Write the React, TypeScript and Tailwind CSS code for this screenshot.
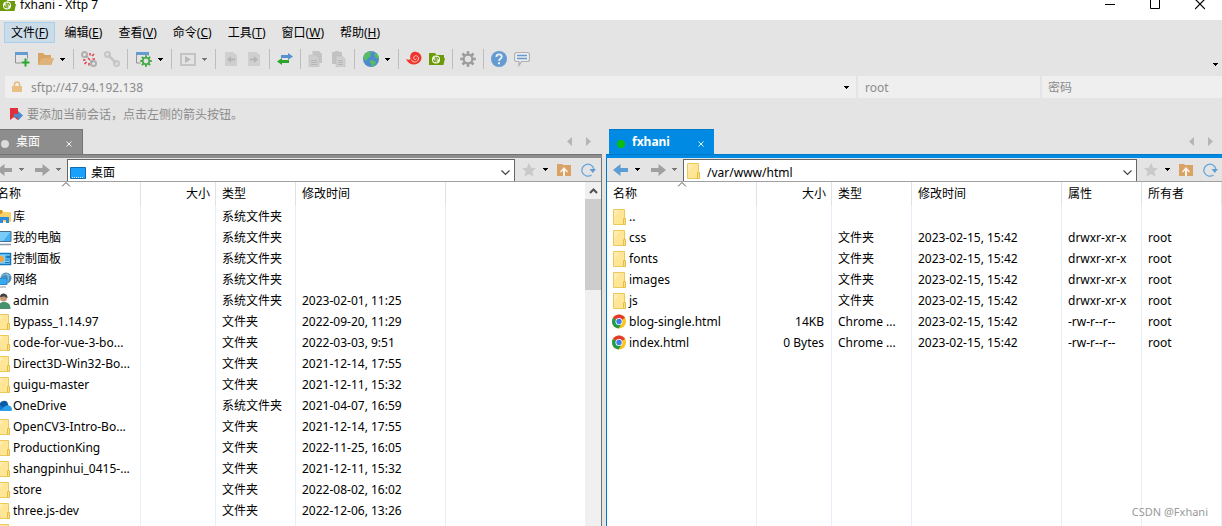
import type { ReactNode } from "react";
import clsx from "clsx";

type IconKind =
  | "folder"
  | "library"
  | "computer"
  | "control"
  | "network"
  | "user"
  | "onedrive"
  | "chrome";

type FileRow = {
  name: string;
  icon: IconKind;
  size?: string;
  type?: string;
  modified?: string;
  attrs?: string;
  owner?: string;
};

const menus = [
  { label: "文件", key: "F" },
  { label: "编辑", key: "E" },
  { label: "查看", key: "V" },
  { label: "命令", key: "C" },
  { label: "工具", key: "T" },
  { label: "窗口", key: "W" },
  { label: "帮助", key: "H" },
];

const localFiles: FileRow[] = [
  { name: "库", icon: "library", type: "系统文件夹" },
  { name: "我的电脑", icon: "computer", type: "系统文件夹" },
  { name: "控制面板", icon: "control", type: "系统文件夹" },
  { name: "网络", icon: "network", type: "系统文件夹" },
  { name: "admin", icon: "user", type: "系统文件夹", modified: "2023-02-01, 11:25" },
  { name: "Bypass_1.14.97", icon: "folder", type: "文件夹", modified: "2022-09-20, 11:29" },
  { name: "code-for-vue-3-bo...", icon: "folder", type: "文件夹", modified: "2022-03-03, 9:51" },
  { name: "Direct3D-Win32-Bo...", icon: "folder", type: "文件夹", modified: "2021-12-14, 17:55" },
  { name: "guigu-master", icon: "folder", type: "文件夹", modified: "2021-12-11, 15:32" },
  { name: "OneDrive", icon: "onedrive", type: "系统文件夹", modified: "2021-04-07, 16:59" },
  { name: "OpenCV3-Intro-Bo...", icon: "folder", type: "文件夹", modified: "2021-12-14, 17:55" },
  { name: "ProductionKing", icon: "folder", type: "文件夹", modified: "2022-11-25, 16:05" },
  { name: "shangpinhui_0415-...", icon: "folder", type: "文件夹", modified: "2021-12-11, 15:32" },
  { name: "store", icon: "folder", type: "文件夹", modified: "2022-08-02, 16:02" },
  { name: "three.js-dev", icon: "folder", type: "文件夹", modified: "2022-12-06, 13:26" },
  { name: "", icon: "folder" },
];

const remoteFolder = { type: "文件夹", modified: "2023-02-15, 15:42", attrs: "drwxr-xr-x", owner: "root" };
const remoteHtml = { type: "Chrome ...", modified: "2023-02-15, 15:42", attrs: "-rw-r--r--", owner: "root" };

const remoteFiles: FileRow[] = [
  { name: "..", icon: "folder" },
  { name: "css", icon: "folder", ...remoteFolder },
  { name: "fonts", icon: "folder", ...remoteFolder },
  { name: "images", icon: "folder", ...remoteFolder },
  { name: "js", icon: "folder", ...remoteFolder },
  { name: "blog-single.html", icon: "chrome", size: "14KB", ...remoteHtml },
  { name: "index.html", icon: "chrome", size: "0 Bytes", ...remoteHtml },
];

function Caret({ className = "fill-black" }: { className?: string }) {
  return (
    <svg viewBox="0 0 5 3" className={clsx("h-[3px] w-[5px] shrink-0", className)} shapeRendering="crispEdges">
      <path d="M0 0h5v1H0zM1 1h3v1H1zM2 2h1v1H2z" />
    </svg>
  );
}

function Svg({ children }: { children: ReactNode }) {
  return (
    <svg viewBox="0 0 16 16" className="h-4 w-4 shrink-0" fill="none">
      {children}
    </svg>
  );
}

function FileIcon({ kind }: { kind: IconKind }) {
  switch (kind) {
    case "library":
      return (
        <Svg>
          <path d="M1 3h13l1 1v9H1z" fill="#f8d16a" />
          <path d="M1 1h5l1 2-2 2H1z" fill="#d79a1c" />
          <path d="M4 14V8h9v6h-3v-3H7v3z" fill="#2f8be0" />
        </Svg>
      );
    case "computer":
      return (
        <Svg>
          <path d="M.5 1.500h14.500v10H.5z" fill="#42b0f2" stroke="#4a6f8c" />
          <path d="M1 2h13.500L7 11H1z" fill="#7accf8" />
          <path d="M2 14.500h13" stroke="#8b9bab" strokeWidth="1.500" />
        </Svg>
      );
    case "control":
      return (
        <Svg>
          <path d="M.5 2.500h14v11H.5z" fill="#7fcdf7" stroke="#1379bd" strokeWidth="1.500" />
          <circle cx="5" cy="8" r="3" fill="#f2a33a" />
          <path d="M10 5h1.500v2H10zM12.500 5h1v2h-1zM9 9h4.500M9 11.500h4.500" stroke="#1379bd" />
        </Svg>
      );
    case "network":
      return (
        <Svg>
          <circle cx="10" cy="6" r="5.500" fill="#4a90bf" />
          <path d="M10 .5c3 2 3 9 0 11M5 4c3-2 6-2 9 0" stroke="#9cc7de" />
          <path d="M1 6.500h10v6H1z" fill="#39a9f0" stroke="#2b8bd0" />
          <path d="M2 15h8" stroke="#8b9bab" />
        </Svg>
      );
    case "user":
      return (
        <Svg>
          <circle cx="7.500" cy="5" r="3.500" fill="#c99a78" />
          <path d="M4 4C4-1 12-.5 11.500 5c-1 0-2-1-3-1.500C7 3.500 6 4 4 4z" fill="#45413c" />
          <path d="M2 16c0-5 2-7 6-7s6.500 2 6.500 7z" fill="#47926e" />
        </Svg>
      );
    case "onedrive":
      return (
        <Svg>
          <path d="M4 8a4 4 0 0 1 8-2l1 4-9 1z" fill="#0c59a4" />
          <path d="M1 12.500A3.500 3.500 0 0 1 4 7l8 5.500z" fill="#1577cf" />
          <path d="M4 13l5-5c4-2 7 1 7 3.500 0 1-1 1.500-2 1.500z" fill="#2a9fe8" />
        </Svg>
      );
    case "chrome":
      return (
        <Svg>
          <circle cx="7" cy="7.500" r="7" fill="#fcc31e" />
          <path d="M7 7.500L.94 4A7 7 0 0 1 13.060 4z" fill="#e33b2e" />
          <path d="M7 7.500L.94 4A7 7 0 0 0 6.500 14.480L9.500 10z" fill="#219a4b" />
          <circle cx="7" cy="7.500" r="3.500" fill="#fff" />
          <circle cx="7" cy="7.500" r="2.700" fill="#3b7de9" />
        </Svg>
      );
    default:
      return (
        <Svg>
          <path d="M1.500.5h11v15h-11z" fill="#ffe596" stroke="#ecc958" />
          <path d="M2 1h6L2 9z" fill="#ffecb0" />
          <path d="M11.500 9.500h2v6h-2z" fill="#fbe08a" stroke="#e6be45" />
        </Svg>
      );
  }
}

function Xftp() {
  return (
    <>
      <path d="M0 2h6l1.500 2H15v3h1l-1.500 7H0z" fill="#6b9a08" />
      <circle cx="7" cy="8.500" r="4" fill="#fff" />
      <path d="M6.200 5.500v5c-1 .5-1.700-.5-1.700-2M7.800 11.500v-5c1-.5 1.700.5 1.700 2" stroke="#6b9a08" strokeWidth="1.100" />
    </>
  );
}

function Gear({ cx, cy, r, color, hole }: { cx: number; cy: number; r: number; color: string; hole: string }) {
  return (
    <g>
      {[0, 45, 90, 135].map((angle) => (
        <path
          key={angle}
          d={`M${cx} ${cy - r}V${cy + r}`}
          stroke={color}
          strokeWidth={r / 3}
          transform={`rotate(${angle} ${cx} ${cy})`}
        />
      ))}
      <circle cx={cx} cy={cy} r={r * 0.7} fill={color} />
      <circle cx={cx} cy={cy} r={r * 0.42} fill={hole} />
    </g>
  );
}

function Tool({
  label,
  drop,
  children,
}: {
  label: string;
  drop?: "on" | "off";
  children: ReactNode;
}) {
  return (
    <button
      type="button"
      aria-label={label}
      className={clsx("flex h-6 shrink-0 items-center", drop ? "w-9 gap-[6px] pl-[5px]" : "w-[23px] justify-center")}
    >
      <Svg>{children}</Svg>
      {drop && <Caret className={drop === "on" ? "fill-black" : "fill-[#777]"} />}
    </button>
  );
}

function Separator() {
  return (
    <div className="flex w-2 justify-center">
      <div className="h-5 w-px bg-[#bdbdbd]" />
    </div>
  );
}

function Toolbar() {
  return (
    <div className="flex items-center justify-between pl-[10px] pr-1">
      <div className="flex items-center">
        <Tool label="新建会话">
          <path d="M1.500 1.500h12V12h-12z" stroke="#929292" />
          <path d="M1 1h13v3H1z" fill="#649bd0" />
          <path d="M11.500 7v9M7 11.500h9" stroke="#e4e4e4" strokeWidth="4" />
          <path d="M11.500 7.500v8M7.500 11.500h8" stroke="#2ca52c" strokeWidth="2" />
        </Tool>
        <Tool label="打开会话" drop="on">
          <path d="M0 2h5l2 2h6v3H4l-3 7H0z" fill="#d9a566" />
          <path d="M3.500 7H16l-2.500 7H1z" fill="#dfb27a" />
        </Tool>
        <Separator />
        <Tool label="断开">
          <circle cx="3.500" cy="3.500" r="2.500" stroke="#b0b0b0" strokeWidth="2" />
          <circle cx="12.500" cy="12.500" r="2.500" stroke="#b0b0b0" strokeWidth="2" />
          <path d="M5 5l1.500 1.500M9.500 9.500l2 2" stroke="#a5a5a5" strokeWidth="2" />
          <path d="M9 2v2.500M13 3l-2 2M11.500 8H14M2 9h2.500M3.500 13l2-2M8 12v2.500M7 7l2 2" stroke="#e33c48" strokeWidth="1.500" />
        </Tool>
        <Tool label="连接">
          <circle cx="3.500" cy="3.500" r="2.500" stroke="#c6c6c6" strokeWidth="2" />
          <circle cx="12.500" cy="12.500" r="2.500" stroke="#c6c6c6" strokeWidth="2" />
          <path d="M4 4l8 8" stroke="#c6c6c6" strokeWidth="2.500" />
        </Tool>
        <Separator />
        <Tool label="属性" drop="on">
          <path d="M.5 1.500h12V12H.5z" stroke="#929292" />
          <path d="M0 1h13v3H0z" fill="#649bd0" />
          <circle cx="10" cy="10" r="6" fill="#e4e4e4" />
          <Gear cx={10} cy={10} r={5.8} color="#45a845" hole="#e4e4e4" />
        </Tool>
        <Separator />
        <Tool label="运行" drop="off">
          <path d="M1 3h14v11H1z" stroke="#c4c4c4" strokeWidth="2" />
          <path d="M5 5l6 3.500L5 12z" fill="#b9b9b9" />
        </Tool>
        <Separator />
        <Tool label="向左传输">
          <path d="M2 1h8l4 3v11H2z" fill="#cfcfcf" />
          <path d="M12 7.500v2H8V12L4 8.500 8 5v2.500z" fill="#b5b5b5" />
        </Tool>
        <Tool label="向右传输">
          <path d="M2 1h8l4 3v11H2z" fill="#cfcfcf" />
          <path d="M4 7.500v2h4V12l4-3.500L8 5v2.500z" fill="#b5b5b5" />
        </Tool>
        <Separator />
        <Tool label="同步">
          <path d="M4 4h7V2l5 3.500L11 9V7H4z" fill="#5792cf" />
          <path d="M12 9H5V7l-5 3.500L5 14v-2h7z" fill="#2ca52c" />
        </Tool>
        <Separator />
        <Tool label="复制">
          <path d="M4.500 0H11l3 3v9H4.500z" fill="#c4c4c4" />
          <path d="M1 4h7l3 3v9H1z" fill="#cdcdcd" stroke="#c0c0c0" strokeWidth=".6" />
          <path d="M3 9.500h6M3 11.500h6M3 13.500h6" stroke="#b5b5b5" />
        </Tool>
        <Tool label="粘贴">
          <path d="M1 1h3V0h4v1h3v12H1z" fill="#c2c2c2" />
          <path d="M5 5h6l3 3v8H5z" fill="#d0d0d0" stroke="#bcbcbc" strokeWidth=".6" />
          <path d="M7 9.500h5M7 11.500h5M7 13.500h5" stroke="#b5b5b5" />
        </Tool>
        <Separator />
        <Tool label="编码" drop="on">
          <circle cx="8" cy="8" r="8" fill="#4d8bce" />
          <path d="M2 3C4 0 8 0 9 1L7 3l1 2-3 2-2 3C0 8 0 5 2 3z" fill="#56bd60" />
          <path d="M12 2c3 1 4 4 4 6l-3-1-2-3zM7 9l5 1 1 2-3 3.500c-2 0-1-3-3-4z" fill="#56bd60" />
        </Tool>
        <Separator />
        <Tool label="Xshell">
          <path d="M0 8c2 1 3 1 4.500 0C3 3 7 0 10.500 1c5 1 6 6 4 9C11.500 15 3 15 0 8z" fill="#ef352c" />
          <path d="M5 8.500c2 4 7 2.500 7.500-.5C13 5 9 3.500 7.800 6c-1 2.500 2.200 3.500 2.700 1.500" stroke="#fbd6d3" strokeWidth=".9" />
        </Tool>
        <Tool label="Xftp">
          <Xftp />
        </Tool>
        <Separator />
        <Tool label="选项">
          <Gear cx={8} cy={8} r={7.8} color="#9c9c9c" hole="#e4e4e4" />
        </Tool>
        <Separator />
        <Tool label="帮助">
          <circle cx="8" cy="8" r="8" fill="#659bd1" />
          <path d="M5.300 6c0-3.500 5.500-3.300 5.500-.2C10.800 8 8 7.500 8 10" stroke="#e8f0f8" strokeWidth="1.700" />
          <path d="M7 11.300h2v2H7z" fill="#e8f0f8" />
        </Tool>
        <Tool label="反馈">
          <path d="M2.500 1.500h11a2 2 0 0 1 2 2v5a2 2 0 0 1-2 2H7.500l-2.500 4v-4H2.500a2 2 0 0 1-2-2v-5a2 2 0 0 1 2-2z" fill="#ececec" stroke="#b0b0b0" strokeWidth="1.200" />
          <path d="M3 4.500h10M3 7.500h10" stroke="#659bd1" strokeWidth="1.500" />
        </Tool>
      </div>
      <button type="button" aria-label="工具栏选项" className="pt-[10px]">
        <Caret />
      </button>
    </div>
  );
}

function TitleBar() {
  return (
    <header className="flex h-5 items-start justify-between bg-white">
      <div className="flex h-[10px] items-center gap-1">
        <Svg>
          <Xftp />
        </Svg>
        <h1 className="text-[12px] leading-[10px]">fxhani - Xftp 7</h1>
      </div>
      <div className="flex gap-[35px] pr-[17px] text-black">
        <button type="button" aria-label="最小化" className="flex h-[10px] items-center">
          <svg viewBox="0 0 10 10" className="h-[10px] w-[10px]" stroke="currentColor">
            <path d="M0 4.500h10" />
          </svg>
        </button>
        <button type="button" aria-label="最大化" className="flex h-[10px] items-center">
          <svg viewBox="0 0 10 10" className="h-[10px] w-[10px]" stroke="currentColor" fill="none">
            <path d="M.5-.5h9v9h-9z" />
          </svg>
        </button>
        <button type="button" aria-label="关闭" className="flex h-[10px] items-center">
          <svg viewBox="0 0 10 10" className="h-[10px] w-[10px]" stroke="currentColor" strokeWidth="1.200">
            <path d="M0-1l10 10M10-1L0 9" />
          </svg>
        </button>
      </div>
    </header>
  );
}

function AddressBar() {
  const field = "h-[22px] min-w-0 bg-[#efefef] text-[#8c8c8c] outline-none placeholder:text-[#8c8c8c]";
  return (
    <div className="flex gap-[2px] pl-[5px]">
      <div className="flex h-[22px] min-w-0 flex-1 items-center bg-[#efefef] pl-[6px] pr-[7px]">
        <svg viewBox="0 0 12 12" className="h-3 w-3" fill="none">
          <path d="M3.500 6V3.500a2.500 2.500 0 0 1 5 0V6" stroke="#e6bd85" strokeWidth="1.600" />
          <path d="M1 5h10v6H1z" fill="#eabf83" />
        </svg>
        <input
          aria-label="地址"
          defaultValue="sftp://47.94.192.138"
          className={clsx(field, "flex-1 pl-2")}
        />
        <button type="button" aria-label="历史地址">
          <Caret />
        </button>
      </div>
      <input aria-label="用户名" defaultValue="root" className={clsx(field, "w-[182px] px-[7px]")} />
      <input aria-label="密码" type="password" placeholder="密码" className={clsx(field, "w-[180px] px-[6px]")} />
    </div>
  );
}

function Arrow({ flip, className }: { flip?: boolean; className: string }) {
  return (
    <svg viewBox="0 0 16 12" className={clsx("h-3 w-4", className, flip && "-scale-x-100")}>
      <path d="M0 6L7.500 0v4H15v4H7.500v4z" />
    </svg>
  );
}

function FileTable({ rows, columns }: { rows: FileRow[]; columns: string[] }) {
  const isRemote = columns.length > 4;
  const cell = "overflow-hidden whitespace-nowrap border-r border-[#e6effa] p-0 pl-[6px]";
  return (
    <table className="h-full w-full table-fixed border-separate border-spacing-0 text-left">
      <colgroup>
        <col className="w-[150px]" />
        <col className="w-[75px]" />
        <col className="w-[80px]" />
        <col className="w-[150px]" />
        {isRemote && <col className="w-[80px]" />}
        {isRemote && <col className="w-[80px]" />}
        <col />
      </colgroup>
      <thead>
        <tr className="h-6">
          {columns.map((column, i) => (
            <th
              key={column}
              className={clsx(
                "relative border-r border-[#e2e2e2] p-0 pl-[6px] font-normal",
                i === 1 && "pr-[5px] text-right",
              )}
            >
              {column}
              {i === 0 && (
                <svg
                  viewBox="0 0 9 5"
                  className="absolute left-1/2 top-0 h-[5px] w-[9px] -translate-x-1/2"
                  fill="none"
                  stroke="#555"
                >
                  <path d="M.5 4.500l4-4 4 4" />
                </svg>
              )}
            </th>
          ))}
          <th className="p-0" />
        </tr>
      </thead>
      <tbody>
        {rows.map((row, i) => (
          <tr key={i} className="h-[21px]">
            <td className="overflow-hidden whitespace-nowrap border-r border-[#e6effa] p-0 pl-[5px]">
              <div className="flex items-center gap-px">
                <FileIcon kind={row.icon} />
                {row.name}
              </div>
            </td>
            <td className={clsx(cell, "pr-[7px] text-right")}>{row.size}</td>
            <td className={cell}>{row.type}</td>
            <td className={cell}>{row.modified}</td>
            {isRemote && <td className={cell}>{row.attrs}</td>}
            {isRemote && <td className={cell}>{row.owner}</td>}
            <td className="p-0" />
          </tr>
        ))}
        {/* takes the rest of the height so the column rules reach the bottom */}
        <tr>
          {columns.map((column) => (
            <td key={column} className="border-r border-[#e6effa] p-0" />
          ))}
          <td className="p-0" />
        </tr>
      </tbody>
    </table>
  );
}

function Scrollbar() {
  return (
    <div className="flex w-4 shrink-0 flex-col items-center bg-[#f0f0f0]">
      <button type="button" aria-label="向上滚动" className="flex h-[17px] items-center">
        <svg viewBox="0 0 9 6" className="h-[6px] w-[9px]" fill="none" stroke="#505050" strokeWidth="2">
          <path d="M1 5l3.500-3.500L8 5" />
        </svg>
      </button>
      <div className="h-[91px] w-full bg-[#cdcdcd]" />
    </div>
  );
}

type PaneProps = {
  active?: boolean;
  title: string;
  path: string;
  pathIcon: ReactNode;
  rows: FileRow[];
  columns: string[];
};

function Pane({ active, title, path, pathIcon, rows, columns }: PaneProps) {
  return (
    <section className="flex min-h-0 min-w-0 flex-col">
      <div className="flex h-[25px] items-stretch justify-between pl-[3px] pr-[11px]">
        <div
          className={clsx(
            "flex items-center border-t pl-2 text-white",
            active ? "w-[105px] border-[#0079c7] bg-[#008ae3]" : "w-[90px] border-r border-[#737373] bg-[#8d8d8d]",
          )}
        >
          <span className={clsx("mt-1 h-2 w-2 rounded-full", active ? "bg-[#0dbd0d]" : "bg-[#dadada]")} />
          <span className={clsx("flex-1 pl-[7px]", active && "font-bold")}>{title}</span>
          <button type="button" aria-label="关闭标签" className="px-[10px] pt-[3px]">
            <svg viewBox="0 0 6 6" className="h-[6px] w-[6px]" stroke="#fff" strokeWidth=".9">
              <path d="M.5.5l5 5M5.500.5l-5 5" />
            </svg>
          </button>
        </div>
        <div className="flex items-center gap-[14px]">
          <button type="button" aria-label="上一个标签">
            <svg viewBox="0 0 5 9" className="h-[9px] w-[5px] fill-[#b5b5b5]">
              <path d="M5 0v9L0 4.500z" />
            </svg>
          </button>
          <button type="button" aria-label="下一个标签">
            <svg viewBox="0 0 5 9" className="h-[9px] w-[5px] fill-[#b5b5b5]">
              <path d="M0 0v9l5-4.500z" />
            </svg>
          </button>
        </div>
      </div>
      <div className={clsx("h-1 border-t", active ? "border-[#0079c7] bg-[#008ae3]" : "border-[#737373] bg-[#8d8d8d]")} />
      <div
        className={clsx(
          "flex min-h-0 flex-1 flex-col border-x",
          active ? "border-[#0079c7]" : "border-[#737373]",
        )}
      >
        <div className="flex h-6 items-center border-b border-[#a0a0a0] pl-[6px]">
          <button type="button" aria-label="后退" className="flex items-center gap-[6px]">
            <Arrow className={active ? "fill-[#5d9dd5]" : "fill-[#a0a0a0]"} />
            <Caret className={active ? "fill-black" : "fill-[#777]"} />
          </button>
          <button type="button" aria-label="前进" className="flex items-center gap-[6px] pl-[10px]">
            <Arrow flip className="fill-[#a0a0a0]" />
            <Caret className="fill-[#777]" />
          </button>
          <div className="ml-[6px] flex h-[22px] min-w-0 flex-1 items-center self-end border border-b-0 border-[#666] bg-white pl-[2px]">
            {pathIcon}
            <div className="relative min-w-0 flex-1">
              <select aria-label="路径" className="h-[21px] w-full appearance-none bg-white pl-[5px] pt-1 outline-none">
                <option>{path}</option>
              </select>
              <svg
                viewBox="0 0 9 6"
                className="pointer-events-none absolute right-1 top-[10px] h-[6px] w-[9px]"
                fill="none"
                stroke="#444"
                strokeWidth="1.200"
              >
                <path d="M.5.5l4 4 4-4" />
              </svg>
            </div>
          </div>
          <button type="button" aria-label="收藏" className="ml-[6px] flex items-center gap-[6px]">
            <Svg>
              <path d="M8 1l2.200 4.800 4.800.5-3.600 3.300 1 5L8 12l-4.400 2.600 1-5L1 6.300l4.800-.5z" fill="#c9c9c9" />
            </Svg>
            <Caret />
          </button>
          <button type="button" aria-label="上级目录" className="ml-2">
            <Svg>
              <path d="M1 2h5l1 1h8v11H1z" fill="#d8a365" />
              <path d="M8 5l4 4.500-1 1-2-2V14H7V8.500l-2 2-1-1z" fill="#fbf3e8" />
            </Svg>
          </button>
          <button type="button" aria-label="刷新" className="ml-2 mr-[5px]">
            <Svg>
              <path d="M11.500 13A6 6 0 1 1 13.800 7" stroke="#68a5d9" strokeWidth="1.300" />
              <path d="M9.500 7H16l-3.200 4z" fill="#5d9dd5" />
            </Svg>
          </button>
        </div>
        <div className="flex min-h-0 flex-1 overflow-hidden bg-white">
          <div className="min-w-0 flex-1">
            <FileTable rows={rows} columns={columns} />
          </div>
          {!active && <Scrollbar />}
        </div>
      </div>
    </section>
  );
}

export default function App() {
  return (
    <div className="relative flex h-screen flex-col overflow-hidden bg-[#e4e4e4] font-['Noto_Sans','Noto_Sans_CJK_SC',sans-serif] text-xs leading-4 text-black">
      <TitleBar />
      <nav className="flex gap-[2px] pl-1 pt-[2px]">
        {menus.map((menu, i) => (
          <button
            key={menu.key}
            type="button"
            className={clsx(
              "h-[21px] border px-[6px]",
              i === 0 ? "border-[#a9cfee] bg-[#cbdce9]" : "border-transparent",
            )}
          >
            {menu.label}(<span className="underline">{menu.key}</span>)
          </button>
        ))}
      </nav>
      <div className="h-[33px] pt-1">
        <Toolbar />
      </div>
      <AddressBar />
      <div className="flex h-[31px] items-center gap-1 pl-2 pt-[2px] text-[#8c8c8c]">
        <svg viewBox="0 0 15 14" className="h-[14px] w-[15px]">
          <path d="M2 0h8v12l-4-3-4 3z" fill="#e0313b" />
          <path d="M6 6h4V3l5 4.500-5 5V9.500H6z" fill="#4d8bce" />
        </svg>
        <span>要添加当前会话，点击左侧的箭头按钮。</span>
      </div>
      {/* the window hangs a little over both sides of the viewport */}
      <main className="-ml-[10px] -mr-[2px] grid min-h-0 flex-1 grid-cols-[306fr_309fr] grid-rows-1 gap-1">
        <Pane
          title="桌面"
          path="桌面"
          pathIcon={
            <svg viewBox="0 0 16 12" className="mt-1 h-3 w-4 shrink-0">
              <path d="M.5.5h15v11H.5z" fill="#18a0fb" stroke="#0f6cb0" />
              <path d="M2 10.500h12" stroke="#d6eefc" strokeDasharray="1 1" />
            </svg>
          }
          rows={localFiles}
          columns={["名称", "大小", "类型", "修改时间"]}
        />
        <Pane
          active
          title="fxhani"
          path="/var/www/html"
          pathIcon={<FileIcon kind="folder" />}
          rows={remoteFiles}
          columns={["名称", "大小", "类型", "修改时间", "属性", "所有者"]}
        />
      </main>
      <span className="absolute bottom-[6px] right-[14px] text-[11px] leading-4 text-[#999]">CSDN @Fxhani</span>
    </div>
  );
}
